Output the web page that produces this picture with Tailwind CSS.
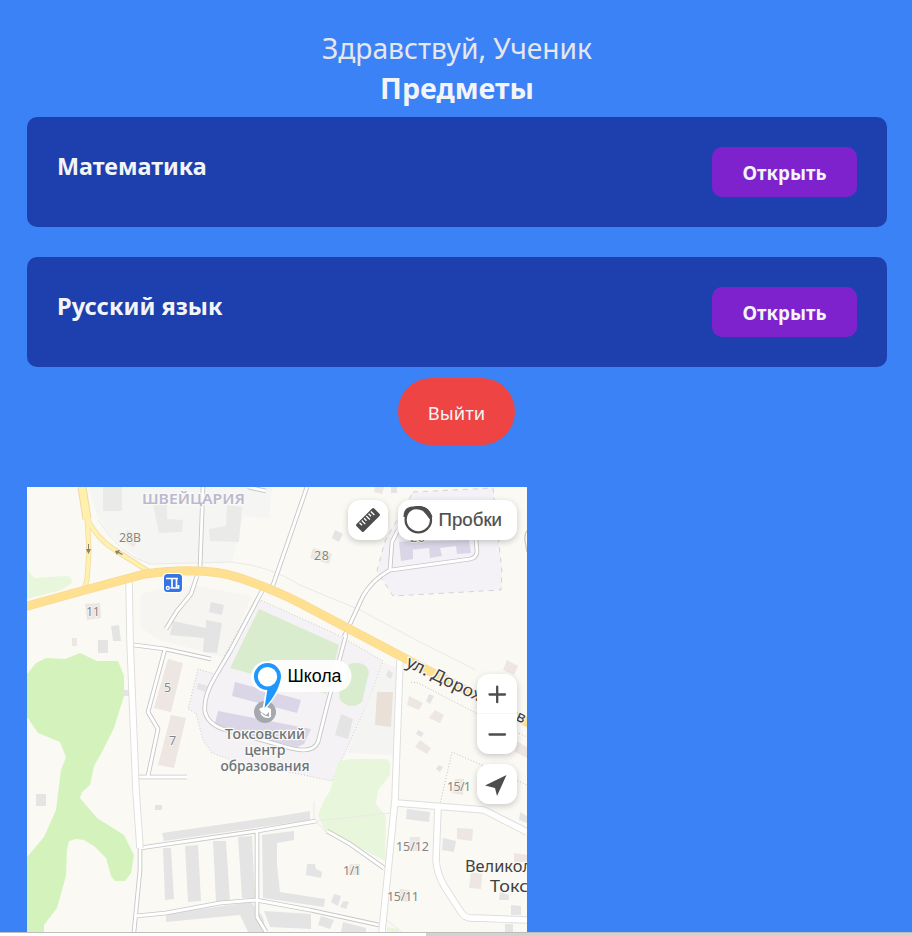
<!DOCTYPE html>
<html lang="ru">
<head>
<meta charset="utf-8">
<title>Предметы</title>
<script src="https://cdn.jsdelivr.net/npm/@tailwindcss/browser@4"></script>
</head>
<body class="h-[936px] overflow-hidden bg-[#3b82f6] font-['Noto_Sans','Open_Sans',sans-serif]">
<div class="flex h-[932px] flex-col overflow-hidden px-[27px] pt-[28px]">
  <header class="flex h-[89px] shrink-0 flex-col items-center whitespace-nowrap pl-0.5">
    <p class="h-10 text-[28.2px] leading-10 text-gray-200">Здравствуй, Ученик</p>
    <h1 class="h-10 text-[28.6px] leading-10 font-bold text-gray-100">Предметы</h1>
  </header>
  <main class="flex w-[860px] shrink-0 flex-col gap-[30px]">
    <section class="flex h-[110px] items-start justify-between rounded-[10px] bg-[#1e40af] p-[30px]">
      <h2 class="text-[23.4px] leading-[38px] font-bold whitespace-nowrap text-gray-100">Математика</h2>
      <button class="h-[50px] w-[145px] rounded-[10px] bg-[#7e22ce] pt-[3px] text-[18.8px] font-bold text-gray-100">Открыть</button>
    </section>
    <section class="flex h-[110px] items-start justify-between rounded-[10px] bg-[#1e40af] p-[30px]">
      <h2 class="text-[23.6px] leading-[38px] font-bold whitespace-nowrap text-gray-100">Русский язык</h2>
      <button class="h-[50px] w-[145px] rounded-[10px] bg-[#7e22ce] pt-[3px] text-[18.8px] font-bold text-gray-100">Открыть</button>
    </section>
  </main>
  <button class="mt-[11px] ml-[371px] h-[67px] w-[117px] shrink-0 rounded-[34px] bg-[#ef4444] pt-[3px] text-[18.4px] text-gray-100">Выйти</button>
  <div class="relative mt-[42px] h-[445px] w-[500px] shrink-0 overflow-hidden bg-[#faf9f4]">
    <svg class="block h-[445px] w-[500px]" viewBox="27 487 500 445" fill="none" font-family="'Noto Sans','Open Sans',sans-serif">
      <!-- districts -->
      <path fill="#f5f5f3" d="M88 487H272L269 519 243 516 232 562 170 563 145 563 110 535 97 515Z"/>
      <path fill="#f6f5f1" d="M141 594 160 589 197 586 251 596 235 638 228 659 190 648 160 640 141 628Z"/>
      <path fill="#f4f2f5" stroke="#ccc" stroke-dasharray="1 2" d="M256 598 338 635 383 661 369 700 332 781 280 770 240 763 212 753 203 740 196 713 188 709 198 669 215 674 225 655Z"/>
      <path fill="#f4f4f3" d="M384 662 401 670 395 755 347 753Z"/>
      <path fill="#f4f2f6" stroke="#d4d3d4" stroke-dasharray="5 5" d="M413 492 493 488 502 572 501 590 393 596 377 571 385 541Z"/>
      <!-- parks -->
      <path fill="#d4f3bc" d="M27 674 36 663 46 658 65 659 80 653 97 661 118 661 124 676 124 696 114 728 103 750 94 766 90 785 82 792 80 798 97 818 124 835 134 855 131 873 125 881 115 881 111 876 106 858 94 846 84 840 76 839 69 841 67 850 66 876 57 908 44 925 44 932H27V857L44 837 56 810 61 770 66 757 60 742 38 733 27 717Z"/>
      <path fill="#e8f6dc" d="M27 569 34 578 66 576Q74 577 71 584L61 590 27 599ZM338 762 350 759H385Q390 760 390 764V775L378 790 376 804 386 816 385 861 358 847 325 831 318 815 324 800 330 791ZM387 927 398 929 400 932H387Z"/>
      <path fill="#d9ecce" d="M259 609 339 645 327 694 230 668Z"/>
      <path fill="#d9ecce" d="M349 664Q366 660 369 672L362 702Q352 710 342 702Q337 698 341 686Z"/>
      <!-- buildings -->
      <g fill="#eaeae9">
        <path d="M103 487H122V511H103ZM152 499 167 500 167 519 183 520 182 532 159 533ZM227 505 242 507 239 542 210 541 209 529 226 526Z"/>
      </g>
      <g fill="#e4e4e5">
        <path d="M173 621 206 628 206 620 222 623 217 653 203 652 204 638 170 635ZM211 602 224 605 222 615 209 612ZM111 626 119 625 121 641 113 641ZM98 640H108V653H98ZM36 794H46V806H36ZM155 805H162V810H155ZM124 690H129V696H124ZM335 530 343 534 339 542 332 538ZM391 487H397V493H391ZM198 683 208 686 205 692 197 689Z"/>
        <path d="M162 833 280 816 310 811V820L164 841ZM163 848 171 848 174 899 165 900ZM185 846 198 845 201 901 188 902ZM213 841 226 841 230 901 216 902ZM238 837 252 836 255 898 242 898ZM262 835 294 831 294 840 277 843V865L280 892 325 899 324 907 263 898ZM166 914 251 902 263 917 266 932H248L240 915 166 922ZM264 911 311 914V929L270 927ZM307 864 315 864 316 869 322 872 321 878 306 875ZM334 894 341 896 338 906 331 902ZM343 901 349 902 346 909 340 907ZM321 916 334 920 330 929 318 925ZM343 922 366 928V932H341ZM407 809 430 812 429 822 406 819ZM443 838 456 841 454 852 442 850ZM511 905 521 906V915H511ZM500 892 509 895V900H499ZM505 924H513V932H505ZM429 694 434 696 430 704 426 701ZM418 730 424 733 421 737 416 734ZM439 765 443 767 440 772 436 769ZM341 714 353 719 348 739 335 735ZM388 670 393 673 391 679 386 676ZM520 812 527 816V823L519 820Z"/>
      </g>
      <g fill="#ede6e2">
        <path d="M85 604 100 603 101 618 87 620ZM72 638H77V646H72ZM168 659 183 663 171 712 154 708ZM171 715 186 718 174 768 158 765ZM313 548 332 554 329 564 310 558ZM375 487 384 487 382 494 374 492ZM409 696 423 703 419 710 407 705ZM435 710 444 715 440 723 429 718ZM420 740 431 748 427 754 415 747ZM507 660 518 666 514 675 503 670ZM455 779 464 779 463 795 452 793ZM516 741 527 747V758L515 752ZM410 837 420 837 420 851 408 851ZM457 828 473 829 472 841 457 839ZM514 853 527 855V862H514ZM471 872 482 874 481 889 469 888ZM400 889 410 890 408 902 397 900ZM350 864H360V875H347ZM127 530 140 536 134 547 123 541Z"/>
        <path fill="#e9e1d7" d="M377 692H393L391 727 375 725Z"/>
      </g>
      <path fill="#dad6e7" d="M235 682 301 700 297 713 232 696ZM218 711 311 729 304 744 297 747 214 727ZM399 542 412 541 413 552 413 559 401 561ZM399 542 469 540 471 553 457 554 456 546 440 548 442 556 430 558 429 548 411 550Z"/>
      <!-- faint outlines -->
      <g stroke="#eaeae6">
        <path d="M98 520Q120 555 150 564L232 562Q270 566 300 585L360 610 420 642 476 670"/>
        <path stroke="#c5c3bf" stroke-dasharray="1 2" d="M411 682 418 683 476 713 527 737M437 817 452 752 477 763 527 785"/>
        <path d="M314 801V819L328 834M280 825 390 813M386 920 402 932"/>
      </g>
      <!-- lanes -->
      <g stroke="#c7c7c7" stroke-width="4.600" stroke-linejoin="round">
        <path d="M203 487 200 568M197 576 191 594 177 611 166 629M307 487 272 588M262 591 231 650 215 677Q203 697 205 712Q208 724 223 729L290 748Q313 754 318 742L327 706 346 635M344 637 363 596Q372 580 390 570L392 542 398 530M391 570 470 559Q476 558 477 552L476 540M134 645 165 649 211 659M165 649 148 712 158 729 148 776M139 777H187M140 848 257 831 316 821M327 831 350 844 384 868M140 848V870L134 932M136 916 166 913 220 903 256 900 310 910 379 925M257 831V917L266 932M248 487 266 491"/>
      </g>
      <g stroke="#fff" stroke-width="2.800" stroke-linejoin="round">
        <path d="M203 487 200 568M197 576 191 594 177 611 166 629M307 487 272 588M262 591 231 650 215 677Q203 697 205 712Q208 724 223 729L290 748Q313 754 318 742L327 706 346 635M344 637 363 596Q372 580 390 570L392 542 398 530M391 570 470 559Q476 558 477 552L476 540M134 645 165 649 211 659M165 649 148 712 158 729 148 776M139 777H187M140 848 257 831 316 821M327 831 350 844 384 868M140 848V870L134 932M136 916 166 913 220 903 256 900 310 910 379 925M257 831V917L266 932M248 487 266 491"/>
      </g>
      <path stroke="#c7c7c7" stroke-width="1.200" d="M528 530Q524 533 525 541L527 552"/>
      <!-- streets -->
      <g stroke="#dededc" stroke-width="7.500" stroke-linejoin="round">
        <path d="M129 578 130 640 136 790 140 848M400 660 395 800 382 932M397 803 484 810 527 832M438 807 436 860Q437 875 446 889L461 912Q465 919 475 918L527 920"/>
      </g>
      <g stroke="#fff" stroke-width="5.600" stroke-linejoin="round">
        <path d="M129 578 130 640 136 790 140 848M400 660 395 800 382 932M397 803 484 810 527 832M438 807 436 860Q437 875 446 889L461 912Q465 919 475 918L527 920"/>
      </g>
      <!-- main roads -->
      <g stroke="#f0d9a4" stroke-linejoin="round">
        <path stroke-width="9" d="M82 487 87 519"/>
        <path stroke-width="5.200" d="M87 517 89 550 87 580 83 592M87 519Q98 540 115 550L148 571"/>
      </g>
      <g stroke="#fff0ac" stroke-linejoin="round">
        <path stroke-width="7" d="M82 487 87 519"/>
        <path stroke-width="3.800" d="M87 517 89 550 87 580 83 592M87 519Q98 540 115 550L148 571"/>
      </g>
      <path stroke="#f7d892" stroke-width="9" d="M24 607 85 590 145 574Q205 566 240 578Q275 590 300 603L410 661 540 729"/>
      <path stroke="#ffdf90" stroke-width="7.800" d="M24 607 85 590 145 574Q205 566 240 578Q275 590 300 603L410 661 540 729"/>
      <g fill="#8b8166"><path d="M88 544h1v5h2l-2.500 5-2.500-5h2ZM115 551l5-1-1 2 4 2-1 1-4-2-1 2Z"/></g>
      <!-- transit stop -->
      <rect x="163" y="573" width="20" height="20" rx="4" fill="#fff"/>
      <rect x="164" y="574" width="18" height="18" rx="3.500" fill="#3474e4"/>
      <path stroke="#fff" stroke-width="1.700" d="M166 578.500H178M172 579V587.500M176.500 579V588M170.500 588H178.500V585"/>
      <circle cx="167.800" cy="588" r="1.500" stroke="#fff" stroke-width="1.300"/>
      <!-- school point -->
      <circle cx="265" cy="712" r="11" fill="#a5a9ae"/>
      <path fill="#fff" d="M259 709l6-3 6 3v8h-2v-5l-3 3-5-3Z"/><path stroke="#fff" stroke-width="1.500" d="M261 713q3 5 9 4"/>
      <!-- labels -->
      <g paint-order="stroke" stroke="#faf9f4" stroke-width="2.500" stroke-linejoin="round">
        <text x="142" y="503.500" font-size="15" font-weight="600" fill="#bbb8d1" textLength="103" lengthAdjust="spacingAndGlyphs">ШВЕЙЦАРИЯ</text>
        <g font-size="12.500" fill="#858585" stroke-width="1.500">
          <text x="119" y="542" textLength="22" lengthAdjust="spacingAndGlyphs">28В</text>
          <text x="86" y="616" textLength="14">11</text>
          <text x="314" y="560" textLength="15">28</text>
          <text x="410" y="542" textLength="15">26</text>
          <text x="164" y="692">5</text><text x="169" y="745">7</text>
          <text x="447" y="791" textLength="24">15/1</text>
          <text x="396" y="851" textLength="33">15/12</text>
          <text x="387" y="901" textLength="32">15/11</text>
          <text x="343" y="875" textLength="18">1/1</text>
        </g>
        <g font-size="13.500" font-weight="500" fill="#6d737a" text-anchor="middle">
          <text x="265" y="738.500" textLength="80" lengthAdjust="spacingAndGlyphs">Токсовский</text>
          <text x="265" y="754.500" textLength="41" lengthAdjust="spacingAndGlyphs">центр</text>
          <text x="265" y="770.500" textLength="89" lengthAdjust="spacingAndGlyphs">образования</text>
        </g>
        <g fill="#3f4042" font-size="17">
          <text transform="translate(405 666) rotate(26)" textLength="86" lengthAdjust="spacingAndGlyphs">ул. Дорож</text>
          <text transform="translate(515 720) rotate(24)" font-size="16">в</text>
          <text x="465" y="872" textLength="67" lengthAdjust="spacingAndGlyphs">Великол</text>
          <text x="490" y="892" textLength="38" lengthAdjust="spacingAndGlyphs">Токс</text>
        </g>
      </g>
      <!-- placemark -->
      <path fill="#fff" fill-opacity=".9" d="M270 660H335.500A16 16 0 0 1 335.500 692H270Z"/>
      <path fill="#fff" d="M267.500 661.300A15 15 0 0 1 282.600 677C282 686 275 699 265.500 709L262.500 709 265.500 692A15 15 0 1 1 267.500 661.300Z"/>
      <path fill="#1e98ff" d="M267.500 663A13.500 13.500 0 0 1 281 677C280 686 274 698 264.500 708L267.300 690A13.500 13.500 0 0 1 267.500 663Z"/>
      <circle cx="267.500" cy="676.700" r="9.700" fill="#fff"/>
      <text x="287.500" y="682" font-family="'Liberation Sans',Arial,sans-serif" font-size="17.500" fill="#000" textLength="54" lengthAdjust="spacingAndGlyphs">Школа</text>
    </svg>
    <!-- map controls -->
    <div class="absolute top-[12.5px] right-[10px] flex gap-[10px]">
      <button class="flex size-10 items-center justify-center rounded-xl bg-white shadow-[0_2px_6px_#0003]">
        <svg class="size-6" viewBox="0 0 24 24"><g transform="rotate(-45 12 12)"><rect x="-.500" y="6.800" width="25" height="10.400" rx="1.500" fill="#4d4d4d"/><path stroke="#fff" stroke-width="1.300" d="M4 8v3.500M7.200 8v5M10.400 8v3.500M13.600 8v5M16.800 8v3.500M20 8v5"/></g></svg>
      </button>
      <button class="flex h-10 w-[119px] items-center rounded-xl bg-white pl-[5px] shadow-[0_2px_6px_#0003]">
        <svg class="h-7 w-[31px] shrink-0" viewBox="0 0 31 28" fill="none"><path fill="#4d4d4d" d="M.5 11Q.5 .5 10 .5H18Q26 .5 29.500 11L25 13 17 3.500 9 4 2 11Z"/><circle cx="15.300" cy="13.700" r="12.700" fill="#fff" stroke="#4d4d4d" stroke-width="2.300"/><path fill="#4d4d4d" d="M4 7 8 2.500 15 .500 21 1.500 28.500 11 26.500 13Q23 8 20 5Q16 2.500 10 3.500Z"/></svg>
        <svg class="ml-1 h-6 w-[66px]" viewBox="0 0 66 24" font-family="'Liberation Sans',Arial,sans-serif"><text x=".5" y="18" font-size="18" fill="#4d4d4d" stroke="#4d4d4d" stroke-width=".2" textLength="63.500" lengthAdjust="spacingAndGlyphs">Пробки</text></svg>
      </button>
    </div>
    <div class="absolute top-[187px] right-[10px] flex flex-col gap-[10px]">
      <div class="flex h-20 w-10 flex-col rounded-xl bg-white shadow-[0_2px_6px_#0003]">
        <button class="flex h-10 items-center justify-center border-b border-[#f7f7f7]"><svg class="size-6" viewBox="0 0 24 24"><path stroke="#4d4d4d" stroke-width="2.300" stroke-linecap="round" d="M4.500 12.500h15.500M12.200 4.700v15.500"/></svg></button>
        <button class="flex h-10 items-center justify-center"><svg class="size-6" viewBox="0 0 24 24"><path stroke="#4d4d4d" stroke-width="2.300" stroke-linecap="round" d="M4.500 12.500h15.500"/></svg></button>
      </div>
      <button class="flex size-10 items-center justify-center rounded-xl bg-white shadow-[0_2px_6px_#0003]"><svg class="size-6" viewBox="0 0 24 24"><path fill="#4d4d4d" d="M21.500 3 12 24 10 16 0 13.500Z"/></svg></button>
    </div>
  </div>
</div>
<div class="flex h-1 border-t border-[#bdbdbd] bg-[#d3d2d3]"><div class="h-full w-[426px] bg-white"></div></div>
</body>
</html>
